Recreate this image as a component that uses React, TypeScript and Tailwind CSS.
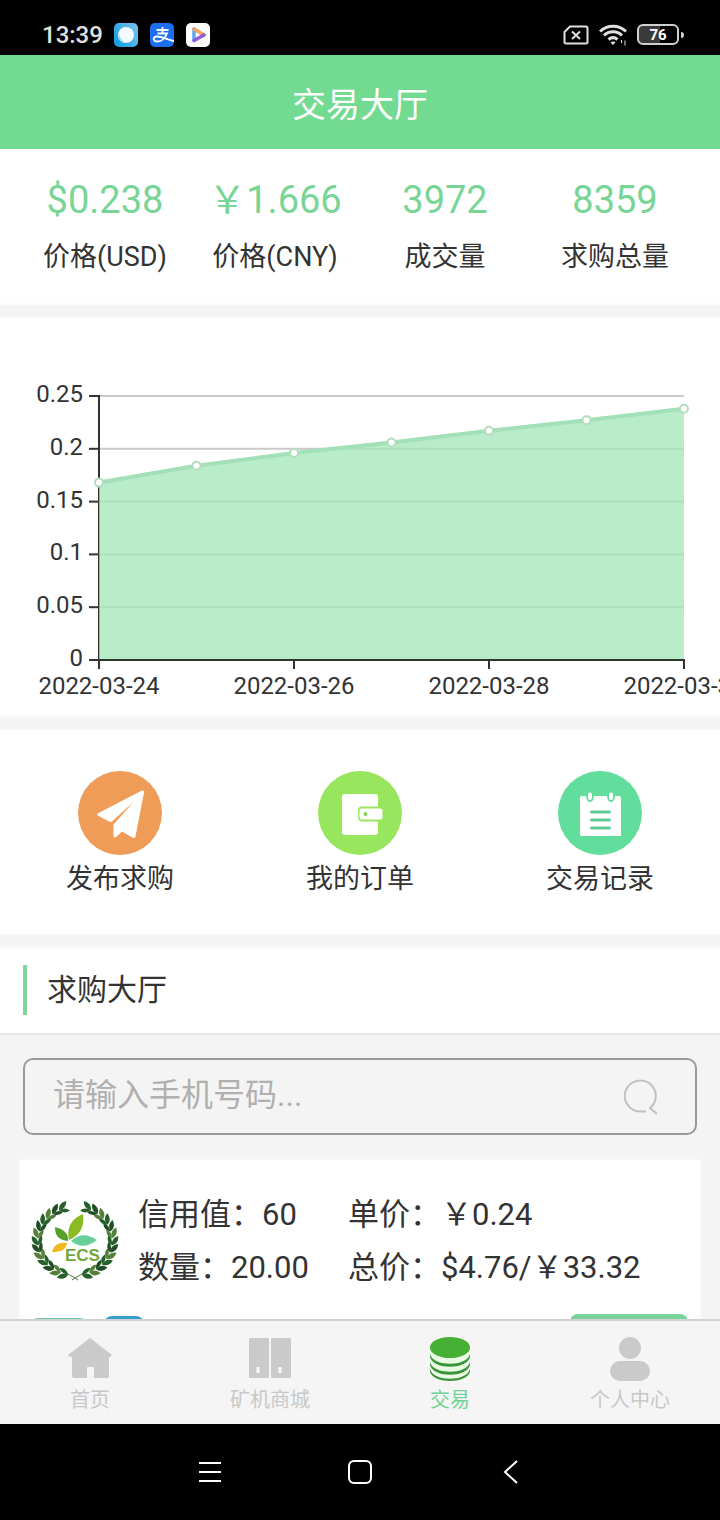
const prices = [
  { date: '2022-03-24', value: 0.168 },
  { date: '2022-03-25', value: 0.184 },
  { date: '2022-03-26', value: 0.196 },
  { date: '2022-03-27', value: 0.206 },
  { date: '2022-03-28', value: 0.217 },
  { date: '2022-03-29', value: 0.227 },
  { date: '2022-03-30', value: 0.238 },
]

const stats = [
  { value: '$0.238', label: '价格(USD)' },
  { value: '￥1.666', label: '价格(CNY)' },
  { value: '3972', label: '成交量' },
  { value: '8359', label: '求购总量' },
]

function StatusBar() {
  return (
    <div className="flex h-[55px] shrink-0 items-center bg-black pl-[42px] pr-9 pt-[14px] text-[#e0e0e0]">
      <span className="text-2xl font-medium leading-6">13:39</span>
      <div className="ml-[11px] flex gap-3">
        <svg className="size-6" viewBox="0 0 24 24" aria-hidden="true">
          <defs>
            <linearGradient id="sky" x1="0" y1="0.6" x2="1" y2="0">
              <stop offset="0" stopColor="#1ba1e2" />
              <stop offset="1" stopColor="#7cc4ef" />
            </linearGradient>
          </defs>
          <rect width="24" height="24" rx="5" fill="url(#sky)" />
          <circle cx="12" cy="12" r="8" fill="#f4fafd" />
          <path d="M5 8C3 15 7 21 14 20C8 19 5 15 5 8Z" fill="#a5dcf8" />
        </svg>
        <svg className="size-6" viewBox="0 0 24 24" aria-hidden="true">
          <rect width="24" height="24" rx="5" fill="#1b6ff0" />
          <path d="M6.500 7H18.500M12.500 4V10.500M7.500 10.500H17C15.500 14 12 18.500 7.500 18.500C2.500 18.500 2.500 13.500 7 13.500C12 13.500 17 16.500 24 18" fill="none" stroke="#fff" strokeWidth="1.800" />
        </svg>
        <svg className="size-6" viewBox="0 0 24 24" aria-hidden="true">
          <rect width="24" height="24" rx="5" fill="#fdfcfa" />
          <path d="M8 17.500V6" stroke="#5aa9ee" strokeWidth="3.500" strokeLinecap="round" />
          <path d="M8 6L18 12" stroke="#f0a35c" strokeWidth="3.500" strokeLinecap="round" />
          <path d="M18 12L8 17.500" stroke="#9259d8" strokeWidth="3.500" strokeLinecap="round" />
        </svg>
      </div>
      <div className="ml-auto flex items-center gap-2.5">
        <svg className="h-5 w-[26px]" viewBox="0 0 26 20" fill="none" stroke="currentColor" aria-hidden="true">
          <path d="M7 1.500H23Q24.500 1.500 24.500 3V17Q24.500 18.500 23 18.500H3Q1.500 18.500 1.500 17V7Z" strokeWidth="2" />
          <path d="M9 6.500L17 14M17 6.500L9 14" strokeWidth="2" />
        </svg>
        <svg className="h-[22px] w-[28px]" viewBox="0 0 28 22" fill="none" stroke="currentColor" aria-hidden="true">
          <path d="M1 7.500C8 0.500 20 0.500 27 7.500M5 11.500C10 6.500 18 6.500 23 11.500M9.500 15.500C12.500 13 15.500 13 18.500 15.500" strokeWidth="3" />
          <path d="M14 21L11.500 18.500Q14 16.500 16.500 18.500Z" fill="currentColor" stroke="none" />
          <path d="M22.500 16V19M26 16.500V21.500" strokeWidth="1" />
        </svg>
        <div className="flex items-center gap-0.5">
          <div className="flex h-[21px] w-[42px] items-center justify-center rounded-[6px] border-2 border-[#d0d0d0] bg-linear-to-r from-[#3a3a3a] from-55% to-black to-55% text-[15px] font-bold leading-4 text-white">
            76
          </div>
          <div className="h-1.5 w-[3px] rounded-r bg-[#d0d0d0]" />
        </div>
      </div>
    </div>
  )
}

const toX = (i: number) => 99 + i * 97.5
const toY = (value: number) => 343 - value * 1056

function PriceChart() {
  const line = prices.map((p, i) => `${toX(i)},${toY(p.value)}`).join(' ')
  return (
    <svg className="block w-full bg-white" viewBox="0 0 720 400" role="img" aria-label="价格走势">
      {[0, 0.05, 0.1, 0.15, 0.2, 0.25].map((v) => (
        <g key={v}>
          <path d={`M99 ${toY(v)}H684`} stroke="#c9c9c9" strokeWidth="2" />
          <path d={`M89 ${toY(v)}H99`} stroke="#333" strokeWidth="2" />
          <text x="83" y={toY(v) + 6} textAnchor="end" fontSize="24" fill="#333">{v}</text>
        </g>
      ))}
      <path d="M99 78V343" stroke="#333" strokeWidth="2" />
      <polygon points={`99,343 ${line} 684,343`} fill="#a1e7b8" fillOpacity="0.75" />
      <path d="M98 343H685" stroke="#2b372e" strokeWidth="2" />
      <polyline points={line} fill="none" stroke="#a3dfb7" strokeWidth="4" />
      {prices.map((p, i) => (
        <g key={p.date}>
          <circle cx={toX(i)} cy={toY(p.value)} r="4" fill="#fff" stroke="#b4dcc0" strokeWidth="2" />
          {i % 2 === 0 && (
            <>
              <path d={`M${toX(i)} 343V352`} stroke="#333" strokeWidth="2" />
              <text x={toX(i)} y="377" textAnchor="middle" fontSize="24" fill="#333">{p.date}</text>
            </>
          )}
        </g>
      ))}
    </svg>
  )
}

function Divider() {
  return <div className="relative h-3 bg-[#f4f4f4] shadow-[0_0_4px_#f4f4f4]" />
}

function PlaneIcon() {
  return (
    <svg className="size-[84px]" viewBox="0 0 84 84" aria-hidden="true">
      <circle cx="42" cy="42" r="42" fill="#f09c59" />
      <path d="M64 19.500Q66.500 19 66 21.500L57.500 65.500Q57 68 54.500 66.500L44 60.500L38 66Q35.500 67.500 35.500 64.500V53.500L56 30.500L34.500 50Q33 51.500 31 50.500L20.500 45Q18 43.500 20.500 42Z" fill="#fff" />
    </svg>
  )
}

function WalletIcon() {
  return (
    <svg className="size-[84px]" viewBox="0 0 84 84" aria-hidden="true">
      <circle cx="42" cy="42" r="42" fill="#98e55e" />
      <path d="M27 23H57Q60 23 60 26V35.500H44Q40 35.500 40 39.500V46.500Q40 50.500 44 50.500H60V61Q60 64 57 64H27Q24 64 24 61V26Q24 23 27 23Z" fill="#fff" />
      <rect x="41.500" y="37.500" width="23" height="11" rx="2" fill="#fff" />
      <circle cx="47.500" cy="43" r="2" fill="#8bd158" />
    </svg>
  )
}

function NotesIcon() {
  return (
    <svg className="size-[84px]" viewBox="0 0 84 84" aria-hidden="true">
      <circle cx="42" cy="42" r="42" fill="#61de9b" />
      <path d="M24 25H28Q28.500 31 32 31T36 25H49Q49.500 31 53 31T57 25H61Q63 25 63 27V65H24Q22 65 22 63V27Q22 25 24 25Z" fill="#fff" />
      <path d="M32 23.500V27M53 23.500V27" stroke="#fff" strokeWidth="4" strokeLinecap="round" />
      <path d="M33.500 41H51.500M33.500 49H51.500M33.500 57H51.500" stroke="#61cb93" strokeWidth="3" strokeLinecap="round" />
    </svg>
  )
}

const actions = [
  { label: '发布求购', icon: <PlaneIcon /> },
  { label: '我的订单', icon: <WalletIcon /> },
  { label: '交易记录', icon: <NotesIcon /> },
]

// one half of the laurel wreath, the other half is mirrored
function Branch() {
  const steps = Array.from({ length: 13 }, (_, i) => 102 + i * 12)
  const colors = ['#24602a', '#54803a', '#1f4d24']
  return (
    <g>
      <path d="M48 81Q42 77 36 74" fill="none" stroke="#58764a" strokeWidth="1" />
      {steps.map((deg, i) => {
        const rad = (deg * Math.PI) / 180
        const x = 45 + 37 * Math.cos(rad)
        const y = 42 + 34 * Math.sin(rad)
        return (
          <g key={deg} transform={`translate(${x} ${y}) rotate(${deg + 93})`} fill={colors[i % 3]}>
            <path d="M-1 0Q1 -7 9 -6Q7 1 -1 0Z" />
            <path d="M-1 0Q3 6 9 4Q6 -1 -1 0Z" />
          </g>
        )
      })}
    </g>
  )
}

function EcsLogo() {
  return (
    <svg className="h-[84px] w-[90px] shrink-0" viewBox="0 0 90 84" role="img" aria-label="ECS">
      <Branch />
      <g transform="translate(90 0) scale(-1 1)">
        <Branch />
      </g>
      <path d="M39 41C36 27 43 19 53 15C55 28 49 37 39 41Z" fill="#8bbb22" />
      <path d="M38 42C28 41 25 36 25 28C34 30 39 35 38 42Z" fill="#57a02c" />
      <path d="M41 42C49 34 58 35 67 41C58 48 49 49 41 42Z" fill="#68cf9b" />
      <path d="M37 44C36 51 31 53 22 53C24 46 29 43 37 44Z" fill="#f2b71d" />
      <text x="35" y="62" fontSize="17" fontWeight="700" fontFamily="Liberation Sans, sans-serif" fill="#72a63b">ECS</text>
    </svg>
  )
}

const tabs = [
  {
    label: '首页',
    icon: <path d="M22 1L44 18L42 20H41V39Q41 41 39 41H26V31Q26 30 25 30H20Q19 30 19 31V41H6Q4 41 4 39V20H2L0 18Z" fill="#cacaca" />,
  },
  {
    label: '矿机商城',
    icon: (
      <>
        <path d="M2 1H20Q21 1 21 2V40Q21 41 20 41H2Q1 41 1 40V2Q1 1 2 1ZM24 1H42Q43 1 43 2V40Q43 41 42 41H24Q23 41 23 40V2Q23 1 24 1Z" fill="#cacaca" />
        <path d="M10 30V36M32 30V36" stroke="#fafafa" strokeWidth="3" />
      </>
    ),
  },
  {
    label: '交易',
    active: true,
    icon: (
      <>
        <path d="M2 11V34C4 46 40 46 42 34V11Z" fill="#eafbe5" />
        <ellipse cx="22" cy="10.500" rx="20" ry="10.500" fill="#46b035" />
        <path d="M2 17C5 30 39 30 42 17V20C39 33 5 33 2 20ZM2 25C5 38 39 38 42 25V28C39 41 5 41 2 28ZM2 32C5 45 39 45 42 32V35C38 47 6 47 2 35Z" fill="#3d933a" />
      </>
    ),
  },
  {
    label: '个人中心',
    icon: (
      <>
        <circle cx="22" cy="11" r="11" fill="#cacaca" />
        <rect x="2" y="24" width="40" height="20" rx="10" fill="#cacaca" />
      </>
    ),
  },
]

export default function App() {
  return (
    <div className="flex h-screen flex-col overflow-hidden bg-[#f4f4f4] font-[Roboto,'Noto_Sans_CJK_SC',sans-serif] text-[#333333]">
      <StatusBar />
      <header className="flex h-[94px] shrink-0 items-center justify-center bg-[#73da91] pt-1.5">
        <h1 className="text-[34px] leading-10 text-white">交易大厅</h1>
      </header>

      <main className="min-h-0 flex-1 overflow-y-auto [scrollbar-width:none]">
        <dl className="grid grid-cols-4 bg-white px-5 pb-7 pt-[26px] text-center">
          {stats.map((s) => (
            <div key={s.label} className="flex flex-col-reverse gap-3 whitespace-nowrap">
              <dt className="text-[27px] leading-10">{s.label}</dt>
              <dd className="text-[38px] leading-[50px] text-[#79d596]">{s.value}</dd>
            </div>
          ))}
        </dl>
        <Divider />
        <PriceChart />
        <Divider />
        <div className="grid grid-cols-3 bg-white pb-9 pt-[42px]">
          {actions.map((a) => (
            <button key={a.label} type="button" className="flex flex-col items-center gap-1">
              {a.icon}
              <span className="text-[27px] leading-10">{a.label}</span>
            </button>
          ))}
        </div>
        <Divider />

        <div className="flex items-center gap-5 border-b-2 border-[#e6e6e6] bg-white px-[23px] py-[18px]">
          <div className="h-[50px] w-1 bg-[#7fd39b]" />
          <h2 className="text-[30px] leading-10">求购大厅</h2>
        </div>

        <form className="mx-[23px] mt-[23px] flex h-[77px] items-center rounded-[10px] border-2 border-[#999999] pl-7 pr-9">
          <input
            type="text"
            aria-label="手机号码"
            placeholder="请输入手机号码..."
            className="h-12 min-w-0 flex-1 bg-transparent pb-1 text-[32px] outline-none placeholder:text-[#b0b0b0]"
          />
          <button type="button" aria-label="搜索">
            <svg className="size-9" viewBox="0 0 36 36" fill="none" stroke="#c0c0c0" strokeWidth="2">
              <path d="M23 32.500H17A15.500 15.500 0 1 1 32 22Q31 26 27 29L34 35" />
            </svg>
          </button>
        </form>

        <article className="mx-5 mt-[25px] bg-white px-2.5 pb-6 pt-7 shadow-[0_0_4px_#ffffff]">
          <div className="flex items-center gap-[18px]">
            <EcsLogo />
            <div className="grid grid-cols-[210px_auto] whitespace-nowrap text-[31px] leading-[53px]">
              <p>信用值：60</p>
              <p>单价：￥0.24</p>
              <p>数量：20.00</p>
              <p>总价：$4.76/￥33.32</p>
            </div>
          </div>
          <div className="mt-5 flex items-center gap-4 pr-0.5">
            <span className="h-[42px] w-[58px] rounded-lg bg-[#73c9a0]" />
            <span className="h-[46px] w-10 rounded-lg bg-[#35a0d0]" />
            <button type="button" aria-label="出售" className="ml-auto h-[50px] w-[118px] rounded-lg bg-[#79d299]" />
          </div>
        </article>
      </main>

      <nav className="grid shrink-0 grid-cols-4 border-t-2 border-[#d2d2d2] bg-[#f5f5f5] pb-2.5 pt-4">
        {tabs.map((t) => (
          <a key={t.label} href="#" className={t.active ? 'flex flex-col items-center gap-1 text-[#72d296]' : 'flex flex-col items-center gap-1 text-[#c8c8c8]'}>
            <svg className="h-[45px] w-11" viewBox="0 0 44 45" aria-hidden="true">{t.icon}</svg>
            <span className="text-xl leading-7">{t.label}</span>
          </a>
        ))}
      </nav>

      <div className="flex h-24 shrink-0 items-center justify-center bg-black text-white">
        <button type="button" aria-label="菜单" className="flex w-[150px] justify-center">
          <svg className="size-6" viewBox="0 0 24 24" stroke="currentColor" strokeWidth="2">
            <path d="M1 3H23M1 12H23M1 21H23" />
          </svg>
        </button>
        <button type="button" aria-label="主屏幕" className="flex w-[150px] justify-center">
          <svg className="size-6" viewBox="0 0 24 24" fill="none" stroke="currentColor" strokeWidth="2">
            <rect x="1" y="1" width="22" height="22" rx="5" />
          </svg>
        </button>
        <button type="button" aria-label="返回" className="flex w-[150px] justify-center">
          <svg className="size-6" viewBox="0 0 24 24" fill="none" stroke="currentColor" strokeWidth="2">
            <path d="M19 1L7 12L19 23" />
          </svg>
        </button>
      </div>
    </div>
  )
}
